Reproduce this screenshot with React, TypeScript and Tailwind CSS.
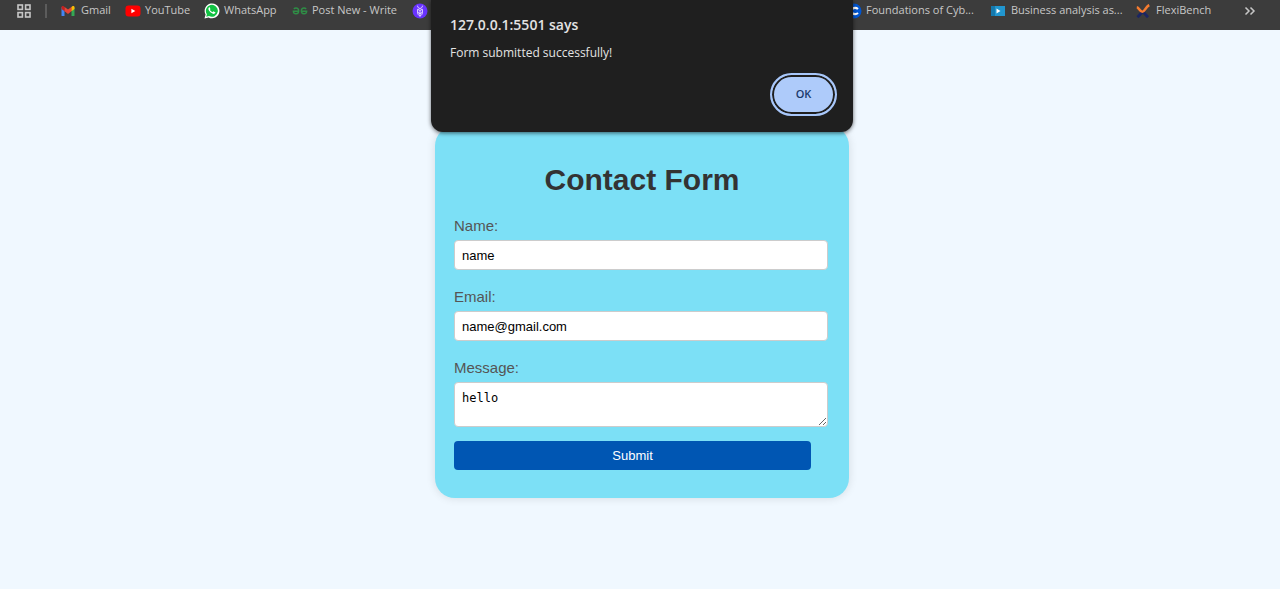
import { useState } from "react";
import type { ReactNode } from "react";

function AppsIcon() {
  return (
    <svg viewBox="0 0 14 14" className="size-3.5" fill="none" stroke="#c7c7c7" strokeWidth="1.6">
      <rect x="1" y="1" width="4.4" height="4.4" />
      <rect x="8.6" y="1" width="4.4" height="4.4" />
      <rect x="1" y="8.6" width="4.4" height="4.4" />
      <rect x="8.6" y="8.6" width="4.4" height="4.4" />
    </svg>
  );
}

function GmailIcon() {
  return (
    <svg viewBox="0 0 14 14" className="size-3.5">
      <path d="M.5 3v8.500q0 .5.5.5h2.500V6z" fill="#4285f4" />
      <path d="M13.500 3v8.500q0 .5-.5.500h-2.500V6z" fill="#34a853" />
      <path d="M3.300 2.700v4.400L7 9.900l3.700-2.800V2.700L7 5.500z" fill="#ea4335" />
      <path d="M.5 3.200v1.900l3 2.200V2.900l-.8-.6C1.700 1.600.5 2.200.5 3.200z" fill="#c5221f" />
      <path d="M13.500 3.200v1.900l-3 2.200V2.900l.8-.6c1-.7 2.200-.1 2.200.9z" fill="#fbbc04" />
    </svg>
  );
}

function YouTubeIcon() {
  return (
    <svg viewBox="0 0 16 14" className="h-3.5 w-4">
      <rect x="0.500" y="1.500" width="15" height="11" rx="3" fill="#ff0000" />
      <path d="M6.400 4.700v4.600L10.300 7z" fill="#fff" />
    </svg>
  );
}

function WhatsAppIcon() {
  return (
    <svg viewBox="0 0 16 16" className="size-4">
      <path d="M.5 15.500l1.100-4A7.400 7.400 0 1 1 4.600 14.400z" fill="#fff" />
      <path d="M2.200 13.800l.7-2.600A6 6 0 1 1 5 13.100z" fill="#12c143" />
      <path
        d="M5.700 4.300c-.3-.1-.6 0-.8.3-.7.8-.6 1.800-.1 2.700a8 8 0 0 0 3.700 3.300c1.100.5 2.200.4 2.700-.5.200-.4.2-.8.1-.9l-1.700-.8c-.2-.1-.3 0-.5.2l-.6.7c-1.100-.4-2-1.200-2.600-2.200l.5-.8c.1-.1.1-.2 0-.4z"
        fill="#fff"
      />
    </svg>
  );
}

function GeeksIcon() {
  return (
    <svg viewBox="0 0 16 16" className="size-4" fill="none" stroke="#2f8d46" strokeWidth="1.400">
      <path d="M1.800 5.900Q2.700 5 4 5a2.700 2.900 0 1 1-2.700 3.200H7" />
      <path d="M14.200 5.900Q13.300 5 12 5a2.700 2.900 0 1 0 2.700 3.200H9" />
    </svg>
  );
}

function PurpleIcon() {
  return (
    <svg viewBox="0 0 16 16" className="size-4">
      <circle cx="8" cy="8" r="7.500" fill="#6933ff" />
      <g fill="none" stroke="#fff" strokeWidth="0.800">
        <path d="M5.600 2.700c0 1.600.8 2.500 2.400 2.800 1.600-.3 2.400-1.200 2.400-2.800M5.600 6.300L8 7.400l2.400-1.100v3.200c0 1.600-1 2.800-2.400 3.800-1.400-1-2.400-2.200-2.400-3.800z" />
        <path d="M8 7.400v5.800M5.700 9.400L8 10.600l2.300-1.200" />
      </g>
    </svg>
  );
}

function CourseIcon() {
  return (
    <svg viewBox="0 0 16 16" className="size-4">
      <circle cx="8" cy="8" r="7.500" fill="#0056d2" />
      <path d="M12 6a4 3 0 1 0 0 4" fill="none" stroke="#fff" strokeWidth="2.200" />
    </svg>
  );
}

function VideoIcon() {
  return (
    <svg viewBox="0 0 14 12" className="h-3 w-3.5">
      <rect y="1" width="14" height="10" fill="#2196cf" />
      <rect y="1" width="4" height="10" fill="#1579ad" />
      <path d="M5.500 3.500v5L9.500 6z" fill="#fff" />
    </svg>
  );
}

function FlexiIcon() {
  return (
    <svg viewBox="0 0 14 14" className="size-3.5" fill="none">
      <path d="M1.500 13.300L6.800 7.500 12 13.300" stroke="#1b2563" strokeWidth="2.800" />
      <path d="M.8 3.200C3 3.500 4 7.800 6.400 7.800S9.500 3 13.200 1" stroke="#f47b30" strokeWidth="2.600" />
    </svg>
  );
}

function Bookmark({ icon, label, className }: { icon: ReactNode; label: string; className: string }) {
  return (
    <a href="#" className={`flex shrink-0 items-center whitespace-nowrap ${className}`}>
      <span className="flex w-5 shrink-0 items-center">{icon}</span>
      {label}
    </a>
  );
}

function BookmarksBar() {
  return (
    <nav className="flex h-[30px] items-center overflow-hidden bg-[#3c3c3c] pr-6 pb-[9px] pl-[17px] font-['Open_Sans','Noto_Sans',sans-serif] text-[11px] text-[#c7c7c7]">
      <button type="button" aria-label="Apps" className="shrink-0">
        <AppsIcon />
      </button>
      <span className="mx-3.5 h-3.5 w-0.5 shrink-0 bg-[#5c5c5c]" />
      <Bookmark icon={<GmailIcon />} label="Gmail" className="w-16" />
      <Bookmark icon={<YouTubeIcon />} label="YouTube" className="w-[79px]" />
      <Bookmark icon={<WhatsAppIcon />} label="WhatsApp" className="w-[88px]" />
      <Bookmark icon={<GeeksIcon />} label="Post New - Write" className="w-[120px]" />
      <a href="#" aria-label="Saved page" className="shrink-0">
        <PurpleIcon />
      </a>
      <div className="ml-auto flex shrink-0 items-center">
        <Bookmark icon={<CourseIcon />} label="Foundations of Cyb..." className="w-[145px]" />
        <Bookmark icon={<VideoIcon />} label="Business analysis as..." className="w-[145px]" />
        <Bookmark icon={<FlexiIcon />} label="FlexiBench" className="w-[108px]" />
        <button type="button" aria-label="More bookmarks">
          <svg viewBox="0 0 12 10" className="h-2.5 w-3" fill="none" stroke="#c7c7c7" strokeWidth="1.500">
            <path d="M1.500 1.500L5 5 1.500 8.500M6.500 1.500L10 5 6.500 8.500" />
          </svg>
        </button>
      </div>
    </nav>
  );
}

function AlertDialog({ onClose }: { onClose: () => void }) {
  return (
    <div className="absolute inset-x-0 top-0 flex justify-center pl-1">
      <div
        role="alertdialog"
        aria-labelledby="alert-title"
        aria-describedby="alert-text"
        className="flex w-[422px] flex-col rounded-b-xl bg-[#1f1f1f] pt-3.5 pr-4 pb-4 pl-[19px] font-['Open_Sans','Noto_Sans',sans-serif] text-[#e3e3e3] shadow-[0_1px_4px_rgba(0,0,0,0.6)]"
      >
        <h2 id="alert-title" className="text-sm/[22px] font-semibold">
          127.0.0.1:5501 says
        </h2>
        <p id="alert-text" className="mt-2 text-xs/[18px]">
          Form submitted successfully!
        </p>
        <button
          type="button"
          onClick={onClose}
          className="mt-[11px] h-[43px] w-[67px] self-end rounded-full border-2 border-[#a8c7fa] bg-[#aecbfa] text-[11px] font-semibold text-[#1b3a6b] shadow-[inset_0_0_0_2px_#1f1f1f]"
        >
          OK
        </button>
      </div>
    </div>
  );
}

const fieldClass =
  "block w-[calc(100%-2px)] rounded-[4px] border border-[#ccc] bg-white px-[7px] text-black outline-none";
const labelClass = "mb-[5px] block text-[15px]/[18px] text-[#555]";

export default function App() {
  const [open, setOpen] = useState(true);
  return (
    <div className="relative flex min-h-screen flex-col bg-[#f0f8ff] font-['Liberation_Sans',Arial,sans-serif]">
      <BookmarksBar />
      <main className="flex justify-center pt-24 pl-1">
        <form
          onSubmit={(e) => {
            e.preventDefault();
            setOpen(true);
          }}
          className="w-[414px] rounded-[20px] bg-[#7ce0f6] px-[19px] pt-9 pb-7 shadow-[0_0_10px_rgba(0,0,0,0.12)]"
        >
          <h1 className="mb-[19px] text-center text-[30px]/[36px] font-bold text-[#333]">Contact Form</h1>
          <div className="mb-[18px]">
            <label htmlFor="name" className={labelClass}>
              Name:
            </label>
            <input id="name" type="text" defaultValue="name" className={`${fieldClass} h-[30px] text-[13px]`} />
          </div>
          <div className="mb-[18px]">
            <label htmlFor="email" className={labelClass}>
              Email:
            </label>
            <input id="email" type="email" defaultValue="name@gmail.com" className={`${fieldClass} h-[30px] text-[13px]`} />
          </div>
          <div className="mb-[14px]">
            <label htmlFor="message" className={labelClass}>
              Message:
            </label>
            <textarea
              id="message"
              defaultValue="hello"
              className={`${fieldClass} h-[45px] resize py-2 font-['DejaVu_Sans_Mono',monospace] text-xs/[15px]`}
            />
          </div>
          <button type="submit" className="block h-[29px] w-[95%] rounded-[4px] bg-[#0056b3] text-[13px] text-white">
            Submit
          </button>
        </form>
      </main>
      {open && <AlertDialog onClose={() => setOpen(false)} />}
    </div>
  );
}
